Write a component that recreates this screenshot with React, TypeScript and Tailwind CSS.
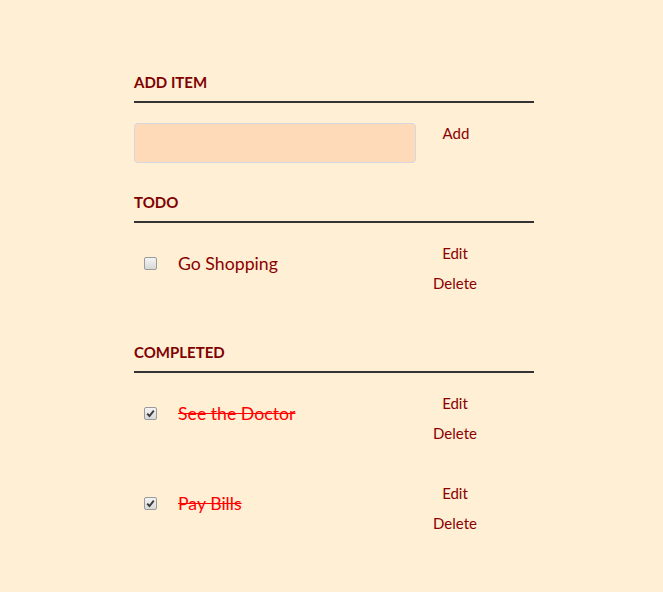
function Box({ checked }: { checked: boolean }) {
  return (
    <span className="ml-[10px] flex h-[13px] w-[13px] items-center justify-center rounded-[2px] border border-[#9a9a9a] bg-gradient-to-b from-[#f4f4f4] to-[#d8d8d8]">
      {checked && (
        <svg width="9" height="9" viewBox="0 0 9 9">
          <path d="M1.2 4.6 L3.5 7 L7.8 1.6" fill="none" stroke="#3a3a3a" strokeWidth="1.9" />
        </svg>
      )}
    </span>
  );
}

function Row({ label, done }: { label: string; done?: boolean }) {
  return (
    <li className="flex h-[90px] items-start pt-[15px]">
      <div className="flex h-[51px] flex-1 items-center">
        <Box checked={!!done} />
        <span
          className={
            done
              ? "ml-[21px] text-[17.7px] leading-[22px] text-[#ff0000] line-through"
              : "ml-[21px] text-[17.7px] leading-[22px] text-[#8b0000]"
          }
        >
          {label}
        </span>
      </div>
      <div className="mr-[39px] flex w-[80px] flex-col items-center text-[15px] text-[#8b0000]">
        <button className="h-[30px]">Edit</button>
        <button className="h-[30px]">Delete</button>
      </div>
    </li>
  );
}

function Heading({ children }: { children: string }) {
  return (
    <h3 className="border-b-2 border-[#333] pb-[9px] text-[15px] font-bold leading-[20px] text-[#800000]">
      {children}
    </h3>
  );
}

export default function App() {
  return (
    <div className="min-h-[592px] bg-[#ffefd5] font-['Lato',sans-serif]">
      <div className="ml-[134px] w-[400px] pt-[72px]">
        <Heading>ADD ITEM</Heading>
        <div className="mt-[20px] flex">
          <input className="h-[40px] w-[282px] rounded-[4px] border border-[#d6d6df] bg-[#ffdab9]" />
          <button className="flex h-[20px] w-[80px] items-center justify-center text-[15px] text-[#8b0000]">
            Add
          </button>
        </div>

        <div className="mt-[29px]">
          <Heading>TODO</Heading>
          <ul>
            <Row label="Go Shopping" />
          </ul>
        </div>

        <div className="mt-[29px]">
          <Heading>COMPLETED</Heading>
          <ul>
            <Row label="See the Doctor" done />
            <Row label="Pay Bills" done />
          </ul>
        </div>
      </div>
    </div>
  );
}
